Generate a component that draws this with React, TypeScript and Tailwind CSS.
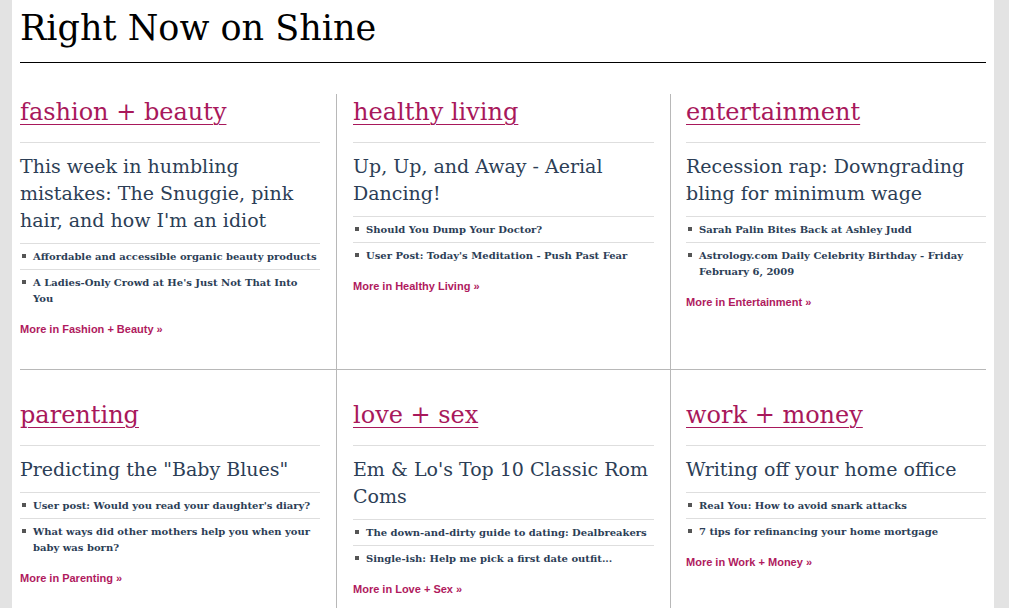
import React from "react";

type Cell = {
  cat: string;
  headline: string[];
  items: string[][];
  more: string;
};

const row1: Cell[] = [
  {
    cat: "fashion + beauty",
    headline: ["This week in humbling", "mistakes: The Snuggie, pink", "hair, and how I'm an idiot"],
    items: [["Affordable and accessible organic beauty products"], ["A Ladies-Only Crowd at He's Just Not That Into", "You"]],
    more: "More in Fashion + Beauty »",
  },
  {
    cat: "healthy living",
    headline: ["Up, Up, and Away - Aerial", "Dancing!"],
    items: [["Should You Dump Your Doctor?"], ["User Post: Today's Meditation - Push Past Fear"]],
    more: "More in Healthy Living »",
  },
  {
    cat: "entertainment",
    headline: ["Recession rap: Downgrading", "bling for minimum wage"],
    items: [["Sarah Palin Bites Back at Ashley Judd"], ["Astrology.com Daily Celebrity Birthday - Friday", "February 6, 2009"]],
    more: "More in Entertainment »",
  },
];

const row2: Cell[] = [
  {
    cat: "parenting",
    headline: ['Predicting the "Baby Blues"'],
    items: [["User post: Would you read your daughter's diary?"], ["What ways did other mothers help you when your", "baby was born?"]],
    more: "More in Parenting »",
  },
  {
    cat: "love + sex",
    headline: ["Em & Lo's Top 10 Classic Rom", "Coms"],
    items: [["The down-and-dirty guide to dating: Dealbreakers"], ["Single-ish: Help me pick a first date outfit..."]],
    more: "More in Love + Sex »",
  },
  {
    cat: "work + money",
    headline: ["Writing off your home office"],
    items: [["Real You: How to avoid snark attacks"], ["7 tips for refinancing your home mortgage"]],
    more: "More in Work + Money »",
  },
];

const serif = "font-['DejaVu_Serif','Liberation_Serif',serif]";

function Lines({ lines }: { lines: string[] }) {
  return (
    <>
      {lines.map((l, i) => (
        <React.Fragment key={i}>
          {i > 0 && <br />}
          {l}
        </React.Fragment>
      ))}
    </>
  );
}

function CellView({ c }: { c: Cell }) {
  return (
    <div>
      <h2 className={`${serif} text-[24px] leading-[32px] pt-[2px] pb-[14px] border-b border-[#dedede] text-[#a8185b]`}>
        <a href="#" className="underline decoration-1 underline-offset-[4px] whitespace-nowrap">
          {c.cat}
        </a>
      </h2>
      <h3 className={`${serif} text-[19px] leading-[27px] pt-[10px] pb-[9px] border-b border-[#dedede] text-[#2c3e56] whitespace-nowrap`}>
        <Lines lines={c.headline} />
      </h3>
      <ul>
        {c.items.map((it, i) => (
          <li
            key={i}
            className={`flex items-start pt-[5px] pb-[4px] ${i < c.items.length - 1 ? "border-b border-[#dedede]" : ""}`}
          >
            <span className="mt-[5px] ml-[2px] mr-[7px] w-[4px] h-[4px] bg-[#555] shrink-0" />
            <span className={`${serif} font-bold text-[10px] leading-[16px] text-[#2c3e56] whitespace-nowrap`}>
              <Lines lines={it} />
            </span>
          </li>
        ))}
      </ul>
      <a
        href="#"
        className="block mt-[10px] font-['Liberation_Sans',Arial,sans-serif] font-bold text-[11px] leading-[16px] text-[#b01a5e]"
      >
        {c.more}
      </a>
    </div>
  );
}

function Row({ cells, first }: { cells: Cell[]; first: boolean }) {
  const pt = first ? "pt-0" : "pt-[27px]";
  return (
    <div className={`flex ${first ? "border-b border-[#b8b8b8]" : ""}`}>
      <div className={`w-[317px] shrink-0 pr-[16px] pb-[32px] border-r border-[#b8b8b8] ${pt}`}>
        <CellView c={cells[0]} />
      </div>
      <div className={`w-[334px] shrink-0 pl-[16px] pr-[16px] pb-[32px] border-r border-[#b8b8b8] ${pt}`}>
        <CellView c={cells[1]} />
      </div>
      <div className={`flex-1 pl-[15px] pb-[32px] ${pt}`}>
        <CellView c={cells[2]} />
      </div>
    </div>
  );
}

export default function App() {
  return (
    <div className="min-h-screen w-full bg-[#e3e3e3] flex">
      <div className="ml-[12px] w-[982px] bg-white px-[8px] min-h-screen">
        <h1 className={`${serif} text-[35px] leading-[44px] pt-[6px] pb-[12px] border-b border-black text-black`}>
          Right Now on Shine
        </h1>
        <div className="mt-[31px]">
          <Row cells={row1} first={true} />
          <Row cells={row2} first={false} />
        </div>
      </div>
    </div>
  );
}
